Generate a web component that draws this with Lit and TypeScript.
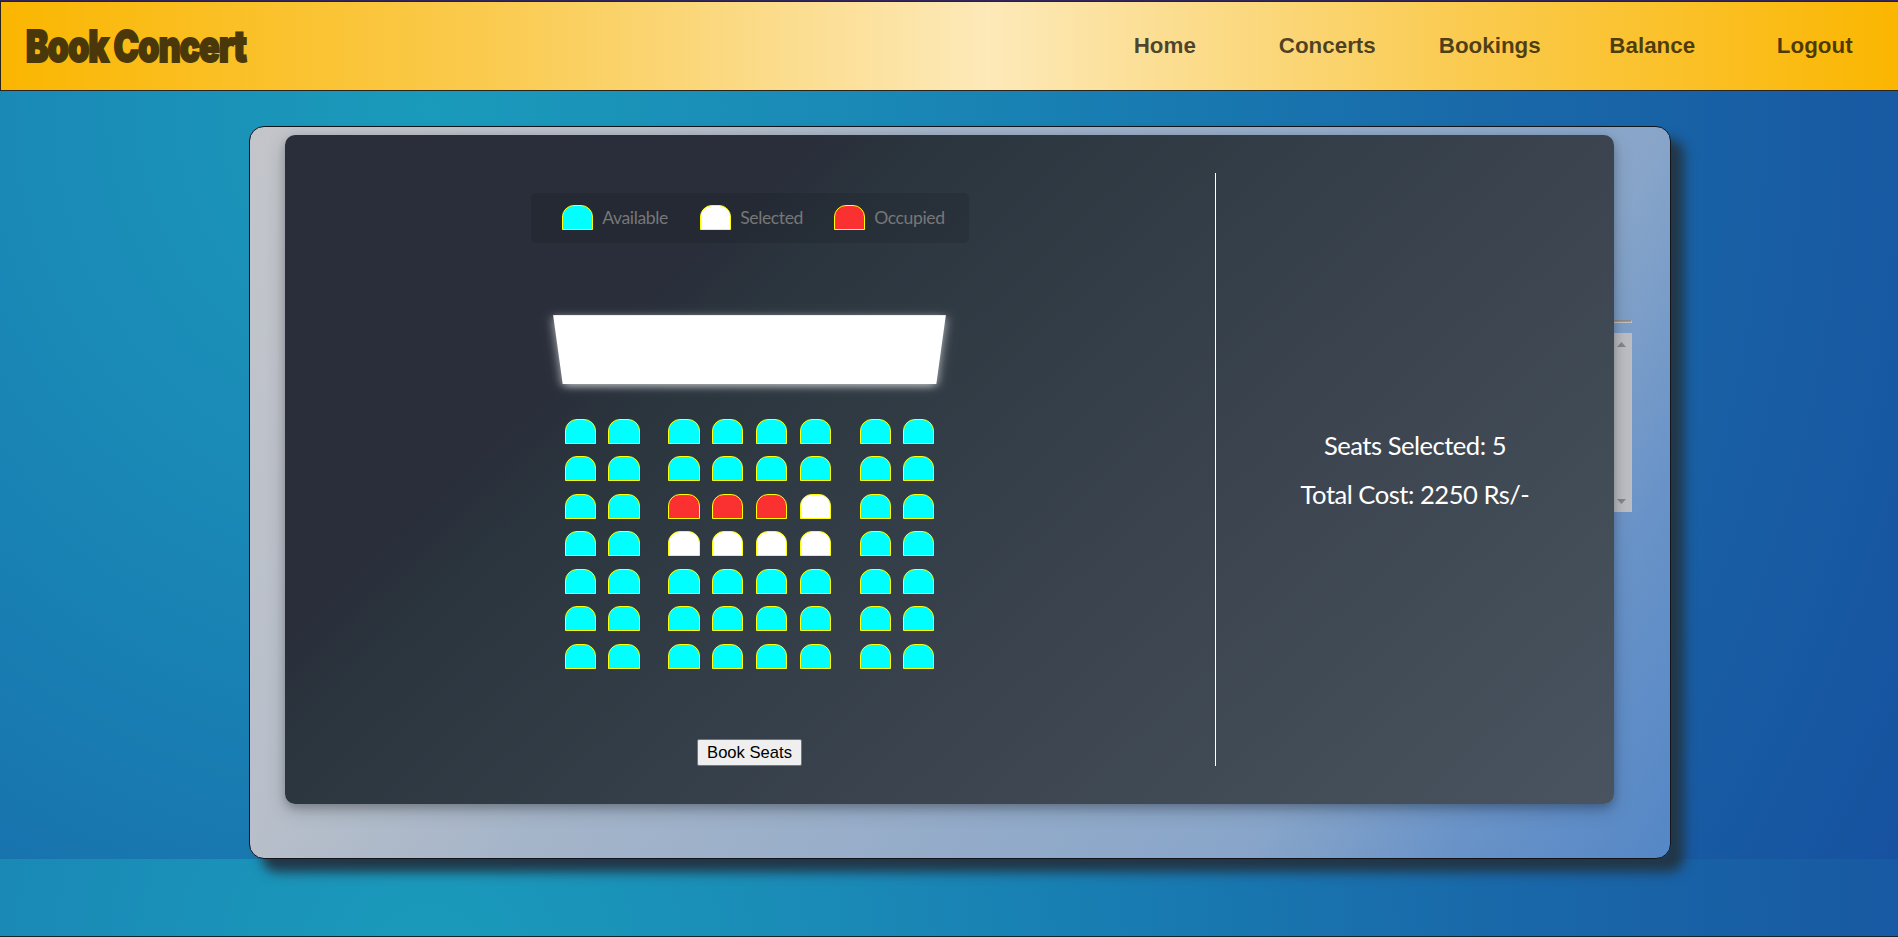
import { LitElement, html, css } from "lit";
import { customElement, state } from "lit/decorators.js";
import { classMap } from "lit/directives/class-map.js";

type SeatState = "available" | "selected" | "occupied";

@customElement("seat-icon")
class SeatIcon extends LitElement {
  static properties = { kind: { type: String, reflect: true } };
  declare kind: SeatState;
  static styles = css`
    :host {
      display: block;
      flex: none;
      box-sizing: border-box;
      width: 31.2px;
      height: 25px;
      background: #00ffff;
      border: 1px solid #ffff00;
      border-radius: 12px 12px 0 0;
    }
    :host([kind="selected"]) { background: #fff; }
    :host([kind="occupied"]) { background: #fb3131; }
  `;
  render() {
    return html``;
  }
}

@customElement("site-header")
class SiteHeader extends LitElement {
  static styles = css`
    :host { display: block; border-top: 1px solid #33265a; }
    .bar {
      box-sizing: border-box;
      display: flex;
      justify-content: space-between;
      width: 1900px;
      height: 90px;
      border: 1px solid #2b2419;
      padding-left: 15px;
      background: linear-gradient(to right, #fab600 0%, #facb50 26%, #fde9b9 52%, #facb50 77%, #fab600 100%);
    }
    .logo { display: block; width: 260px; height: 88px; overflow: visible; }
    .logo text {
      font: 900 43.5px Inter, "Liberation Sans", sans-serif;
      letter-spacing: -1.5px;
      fill: #4a380b;
      stroke: #4a380b;
      stroke-width: 1.8px;
    }
    nav { display: flex; padding-right: 3px; }
    a {
      width: 162.5px;
      text-align: center;
      font: bold 22.4px/26px "Liberation Sans", Arial, sans-serif;
      color: rgba(0, 0, 0, 0.7);
      padding-top: 31px;
    }
  `;
  render() {
    return html`
      <div class="bar">
        <svg class="logo" viewBox="0 0 260 88">
          <text transform="translate(9.8 60.2) scale(0.791 1)">Book Concert</text>
        </svg>
        <nav>
          ${["Home", "Concerts", "Bookings", "Balance", "Logout"].map((t) => html`<a>${t}</a>`)}
        </nav>
      </div>
    `;
  }
}

@customElement("seat-picker")
class SeatPicker extends LitElement {
  @state() private rows: string[] = [
    "AAAAAAAA",
    "AAAAAAAA",
    "AAOOOSAA",
    "AASSSSAA",
    "AAAAAAAA",
    "AAAAAAAA",
    "AAAAAAAA",
  ];

  static styles = css`
    :host {
      box-sizing: border-box;
      display: flex;
      align-items: stretch;
      height: 669px;
      padding: 38px 0;
      border-radius: 10px;
      background: linear-gradient(137deg, #292e3a 0%, #292e3a 26%, #2b353e 32%, #353f49 53%, #3d4550 68%, #414c56 82%, #4a5461 100%);
      box-shadow: 0 4px 8px rgba(0, 0, 0, 0.2), 0 6px 20px rgba(0, 0, 0, 0.19);
      font-family: Lato, sans-serif;
    }
    .hall {
      box-sizing: border-box;
      width: 931px;
      border-right: 1px solid #fff;
      padding-right: 1px;
      display: flex;
      flex-direction: column;
      align-items: center;
    }
    .legend {
      box-sizing: border-box;
      display: flex;
      align-items: center;
      width: 438px;
      height: 50px;
      margin: 20px 0 0 1px;
      padding: 0 0 1px 31px;
      border-radius: 5px;
      background: rgba(0, 0, 0, 0.1);
      color: #777;
      font-size: 17.6px;
      letter-spacing: -0.4px;
    }
    .entry { display: flex; align-items: center; gap: 9px; }
    .w1 { width: 138px; }
    .w2 { width: 134px; }
    .screen {
      width: 383px;
      height: 84.6px;
      margin-top: 65px;
      background: #fff;
      transform: perspective(1000px) rotateX(-35.9deg);
      box-shadow: 0 3px 10px rgba(255, 255, 255, 0.7);
    }
    .seats {
      display: grid;
      row-gap: 12.5px;
      width: 370px;
      margin: 26.2px 0 0 0.3px;
    }
    .row { display: flex; gap: 12.6px; }
    .aisle { margin-right: 16.2px; }
    .aisle.second { margin-right: 16px; }
    button {
      box-sizing: border-box;
      width: 105px;
      height: 27px;
      margin-top: 70.2px;
      padding: 1px 0 0;
      border: 1px solid #767676;
      border-radius: 2px;
      background: #efefef;
      color: #000;
      font: 16.6px "Liberation Sans", Arial, sans-serif;
    }
    .summary {
      flex: 1;
      display: flex;
      flex-direction: column;
      justify-content: center;
      gap: 17px;
      padding-bottom: 1px;
      text-align: center;
      color: #fff;
      font-size: 25.6px;
      letter-spacing: -0.5px;
      line-height: 32px;
    }
  `;

  private kind(c: string): SeatState {
    return c === "O" ? "occupied" : c === "S" ? "selected" : "available";
  }

  render() {
    const chosen = this.rows.join("").split("S").length - 1;
    return html`
      <div class="hall">
        <div class="legend">
          <div class="entry w1"><seat-icon kind="available"></seat-icon>Available</div>
          <div class="entry w2"><seat-icon kind="selected"></seat-icon>Selected</div>
          <div class="entry"><seat-icon kind="occupied"></seat-icon>Occupied</div>
        </div>
        <div class="screen"></div>
        <div class="seats">
          ${this.rows.map(
            (row) => html`<div class="row">
              ${[...row].map(
                (c, i) => html`<seat-icon
                  kind=${this.kind(c)}
                  class=${classMap({ aisle: i === 1 || i === 5, second: i === 5 })}
                ></seat-icon>`
              )}
            </div>`
          )}
        </div>
        <button>Book Seats</button>
      </div>
      <div class="summary">
        <div>Seats Selected: ${chosen}</div>
        <div>Total Cost: ${chosen * 450} Rs/-</div>
      </div>
    `;
  }
}

@customElement("app-root")
class AppRoot extends LitElement {
  static styles = css`
    :host {
      box-sizing: border-box;
      display: block;
      height: 937px;
      overflow: hidden;
      border-bottom: 1px solid #1b222b;
      background: radial-gradient(circle at 430px 110px, #1a9bbb 0px, #1a89b6 430px, #187db2 680px, #1969a9 1050px, #185ba3 1430px, #1652a0 1640px) 0 0 / 100% 859px;
    }
    .card {
      box-sizing: border-box;
      position: relative;
      width: 1422px;
      height: 733px;
      margin: 35px 0 0 249px;
      border: 1px solid #12161c;
      border-radius: 15px;
      padding: 193px 38px 0 35px;
      background: linear-gradient(120deg, #c3c5ca 0%, #b8bfca 22%, #a5b5c9 37%, #88a5c9 77%, #6993c8 88%, #5587c6 100%);
      box-shadow: 13px 13px 12px #223647;
    }
    hr { margin: 0; height: 1px; border: 1px solid #8b8b8e; border-right-color: #c4c0c0; border-bottom-color: #c4c0c0; }
    .list {
      box-sizing: border-box;
      height: 179px;
      margin-top: 10px;
      padding: 9px 6px 8px 0;
      background: #bcbec3;
      display: flex;
      flex-direction: column;
      justify-content: space-between;
      align-items: flex-end;
    }
    .list svg { width: 9px; height: 5px; fill: #858789; }
    seat-picker { position: absolute; left: 35px; top: 8px; width: 1329px; }
  `;
  render() {
    return html`
      <site-header></site-header>
      <main class="card">
        <hr />
        <div class="list">
          <svg viewBox="0 0 9 5"><path d="M4.5 0L9 5H0z" /></svg>
          <svg viewBox="0 0 9 5"><path d="M4.5 5L9 0H0z" /></svg>
        </div>
        <seat-picker></seat-picker>
      </main>
    `;
  }
}
